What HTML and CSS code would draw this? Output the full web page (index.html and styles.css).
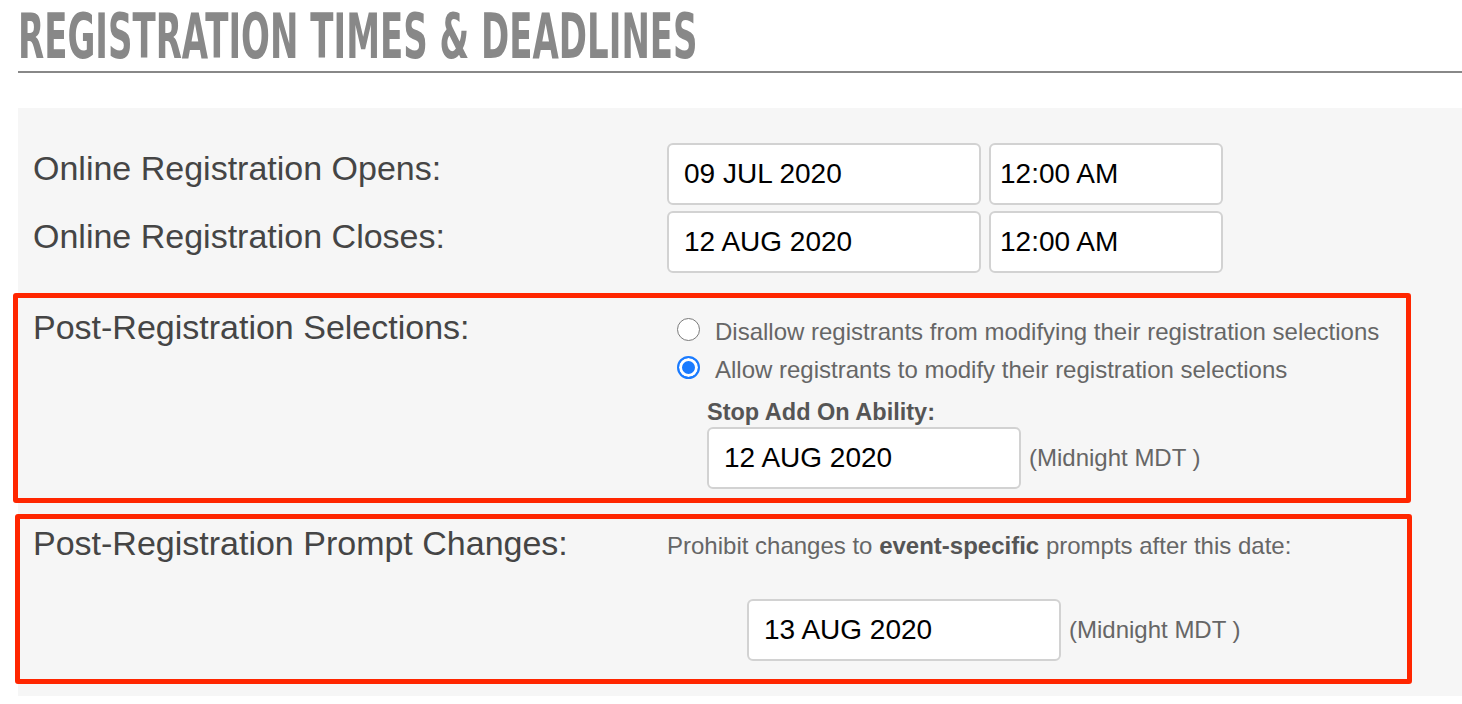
FILE: index.html
```html
<!DOCTYPE html>
<html lang="en">

<head>
    <meta charset="UTF-8">
    <meta name="viewport" content="width=device-width, initial-scale=1.0">
    <title>Registration Times &amp; Deadlines</title>
    <link rel="stylesheet" href="styles.css">
</head>

<body>
    <div class="page">
        <h1 class="section-title"><span>REGISTRATION TIMES &amp; DEADLINES</span></h1>

        <div class="settings-panel">
            <div class="setting-row">
                <div class="setting-label">Online Registration Opens:</div>
                <div class="setting-controls">
                    <input type="text" class="text-input date-input" value="09 JUL 2020">
                    <input type="text" class="text-input time-input" value="12:00 AM">
                </div>
            </div>
            <div class="setting-row row-closes">
                <div class="setting-label">Online Registration Closes:</div>
                <div class="setting-controls">
                    <input type="text" class="text-input date-input" value="12 AUG 2020">
                    <input type="text" class="text-input time-input" value="12:00 AM">
                </div>
            </div>

            <div class="setting-row highlight highlight-selections">
                <div class="setting-label">Post-Registration Selections:</div>
                <div class="option-list">
                    <label class="option">
                        <input type="radio" name="post-selections">
                        Disallow registrants from modifying their registration selections
                    </label>
                    <label class="option">
                        <input type="radio" name="post-selections" checked>
                        Allow registrants to modify their registration selections
                    </label>
                    <div class="addon">
                        <div class="addon-label">Stop Add On Ability:</div>
                        <div class="date-field">
                            <input type="text" class="text-input date-input" value="12 AUG 2020">
                            <span class="tz-note">(Midnight MDT )</span>
                        </div>
                    </div>
                </div>
            </div>

            <div class="setting-row highlight highlight-prompts">
                <div class="setting-label">Post-Registration Prompt Changes:</div>
                <div class="prompt-box">
                    <div class="prompt-note">Prohibit changes to <strong>event-specific</strong> prompts after this date:</div>
                    <div class="date-field prompt-field">
                        <input type="text" class="text-input date-input" value="13 AUG 2020">
                        <span class="tz-note">(Midnight MDT )</span>
                    </div>
                </div>
            </div>
        </div>
    </div>
</body>

</html>
```

FILE: styles.css
```css
/* Page basics */
body {
    margin: 0;
    background: #fff;
    font-family: "Liberation Sans", Arial, sans-serif;
}

.page {
    padding-left: 18px;
}

/* Big condensed section title with rule under it */
.section-title {
    margin: 0;
    padding: 6px 0 3px;
    border-bottom: 2px solid #888;
    font-family: "DejaVu Sans Condensed", "DejaVu Sans", sans-serif;
    font-stretch: condensed;
    font-weight: bold;
    font-size: 63px;
    line-height: 62px;
    color: #888;
}

.section-title span {
    display: inline-block;
    white-space: nowrap;
    transform: scaleX(0.6);
    transform-origin: left center;
}

/* Grey settings panel */
.settings-panel {
    margin-top: 35px;
    padding: 35px 0 12px 15px;
    background: #f6f6f6;
}

.setting-row {
    display: grid;
    grid-template-columns: 634px 1fr;
}

.row-closes {
    margin-top: 6px;
}

.setting-label {
    margin-top: 11px;
    font-size: 34px;
    line-height: 28px;
    color: #454545;
    white-space: nowrap;
}

.setting-controls {
    display: flex;
    gap: 8px;
}

/* Text inputs */
.text-input {
    box-sizing: border-box;
    height: 62px;
    margin: 0;
    padding: 0 0 0 15px;
    border: 2px solid #d2d2d2;
    border-radius: 6px;
    background: #fff;
    color: #000;
    font-family: "Liberation Sans", Arial, sans-serif;
    font-size: 28px;
    outline: none;
}

.date-input {
    width: 314px;
}

.time-input {
    width: 234px;
    padding-left: 9px;
}

/* Red highlight boxes */
.highlight {
    box-sizing: border-box;
    border: 5px solid #ff2600;
    border-radius: 3px;
}

.highlight .setting-label {
    margin-top: 0;
}

.highlight-selections {
    width: 1398px;
    margin: 20px 0 0 -20px;
    padding: 15px 0 9px 15px;
}

.highlight-prompts {
    width: 1397px;
    margin: 11px 0 0 -18px;
    padding: 10px 0 18px 13px;
}

/* Radio options */
.option {
    display: flex;
    align-items: flex-start;
    padding-left: 10px;
    font-size: 24px;
    line-height: 38px;
    color: #666;
}

.option input {
    appearance: none;
    -webkit-appearance: none;
    box-sizing: border-box;
    width: 23px;
    height: 23px;
    margin: 5px 15px 0 0;
    border: 1.5px solid #7a7a7a;
    border-radius: 50%;
    background: #fff;
}

.option input:checked {
    border: 2px solid #1a7bff;
    background: #1a7bff;
    box-shadow: inset 0 0 0 3px #fff;
}

.addon {
    margin: 8px 0 0 40px;
}

.addon-label {
    font-weight: bold;
    font-size: 23.5px;
    line-height: 30px;
    color: #555;
}

.date-field {
    display: flex;
    align-items: center;
    gap: 8px;
}

.tz-note {
    font-size: 24px;
    line-height: 28px;
    color: #666;
}

/* Prompt changes */
.prompt-note {
    margin-top: 3px;
    font-size: 24px;
    line-height: 28px;
    color: #666;
}

.prompt-note strong {
    color: #555;
}

.prompt-field {
    margin: 39px 0 0 80px;
}
```
